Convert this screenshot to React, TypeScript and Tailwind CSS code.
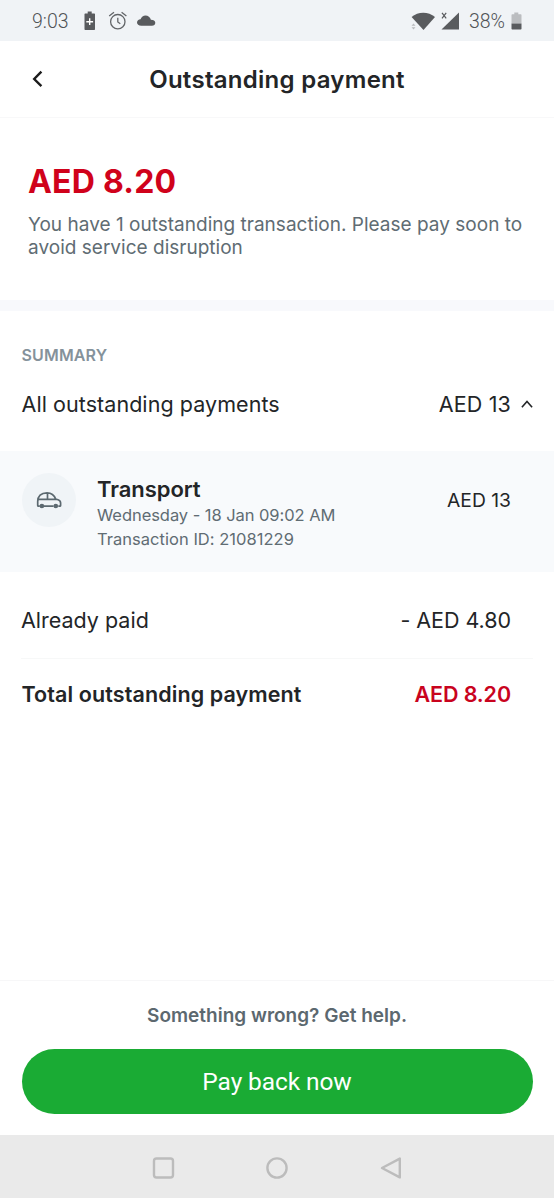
import React from 'react';

const StatusBar = () => (
  <div className="flex h-[41px] items-center bg-[#f0f3f6] pl-8 pr-8 font-['Roboto',sans-serif] text-[19.5px] leading-none text-[#626568]">
    <span className="w-[52px] pt-0.5 font-light text-[#505356]">9:03</span>
    {/* charging saver */}
    <svg className="h-5 w-3" viewBox="0 0 12 20" fill="#595b5e">
      <path d="M3.7 .5h4v1.900h2.600a.7.7 0 0 1 .7.7v15.200a.7.7 0 0 1-.7.7H1.200a.7.7 0 0 1-.7-.7V3.100a.7.7 0 0 1 .7-.7h2.500z" />
      <path d="M5.700 7.300v6.800M2.300 10.700h6.800" stroke="#fff" strokeWidth="1.400" fill="none" />
    </svg>
    <svg className="ml-3 h-5 w-5" viewBox="0 0 20 20" fill="none" stroke="#626568" strokeWidth="1.300">
      <circle cx="9.800" cy="10.700" r="7.200" />
      <path d="M9.800 6.700V11l2.500 1.700M1.200 5.100 6 1.300M13.600 1.300l4.800 3.800" />
    </svg>
    <svg className="ml-2 h-5 w-5" viewBox="0 0 20 20" fill="#595b5e">
      <path d="M5.300 14.800C2.700 14.800 1 13.500 1 11.600s1.500-3.300 3.500-3.400C5.400 5.800 7.300 4.400 9.500 4.400c2.600 0 4.700 1.700 5.400 4.300 2.500 0 4.400 1.200 4.400 3.100 0 1.800-1.400 3-3.400 3z" />
    </svg>
    <div className="ml-auto flex items-center">
      <svg className="h-5 w-[52px]" viewBox="0 0 52 20" fill="#595b5e">
        <path d="M4.600 6C7.800 3.100 12 1.700 16.200 1.700S24.700 3.100 28 6L16.500 18.900z" />
        <path d="m6.500 12.500 2 2.300h-4zM6.500 18.500l2-2.300h-4z" fill="#b9bcbf" />
        <path d="M52 1.500v17H34.500z" />
        <path d="m35 1.800 4.200 5.600m0-5.600L35 7.400" stroke="#595b5e" strokeWidth="1.200" />
      </svg>
      <span className="ml-[10px] pt-0.5 font-light text-[#505356]">38%</span>
      <svg className="ml-[6px] h-5 w-[11px]" viewBox="0 0 11 20">
        <path d="M3.300 1.500h4v1.700h2.500q.700 0 .700.700v8.600H.500V3.900q0-.7.700-.7h2.100z" fill="#bbbdc0" />
        <path d="M.500 12.500h10v5.300q0 .7-.7.7H1.200q-.7 0-.7-.7z" fill="#595b5e" />
      </svg>
    </div>
  </div>
);

const Header = () => (
  <header className="grid h-[77px] grid-cols-[48px_1fr_48px] items-center border-b border-[#f8f8f9]">
    <button type="button" aria-label="Back" className="pl-8">
      <svg className="h-5 w-3" viewBox="0 0 12 20" fill="none" stroke="#1c1c1c" strokeWidth="2.400">
        <path d="M9.400 2.700 2.200 10l7.200 7.200" />
      </svg>
    </button>
    <h1 className="pt-0.5 text-center text-[24px] font-semibold leading-none tracking-[0.28px]">Outstanding payment</h1>
  </header>
);

const CarIcon = () => (
  <svg className="h-[18px] w-[26px]" viewBox="0 0 26 18" fill="none" stroke="#5c6970" strokeWidth="1.700" strokeLinejoin="round">
    <path d="M3.800 15.200H2.500q-.8 0-.8-.8v-3.800C1.700 5 5 1.800 11 1.800c4.700 0 7.400 2.600 8.700 6.300l2.400.6q2.500.8 2.500 3.400v2.300q0 .8-.8.8h-1.500M8 15.200h9.600M2.400 8.300h17.400M11.500 1.800v6.500" />
    <circle cx="5.900" cy="15" r="1.500" fill="#5c6970" />
    <circle cx="19.800" cy="15" r="1.500" fill="#5c6970" />
  </svg>
);

const Transaction = () => (
  <div className="flex h-[121px] bg-[#f8fafc] pl-[21.500px] pr-[43px]">
    <div className="mt-[22px] flex h-[54px] w-[54px] items-center justify-center rounded-full bg-[#f0f4f7]">
      <CarIcon />
    </div>
    <div className="ml-[21.500px] mt-[26px] text-[16.500px] leading-[23px] text-[#606c73]">
      <h2 className="mb-[3px] text-[22px] font-semibold leading-[24px] tracking-[-0.05px] text-[#232527]">Transport</h2>
      <p className="tracking-[-0.06px]">Wednesday - 18 Jan 09:02 AM</p>
      <p className="mt-px tracking-[0.03px]">Transaction ID: 21081229</p>
    </div>
    <span className="ml-auto mt-[37px] text-[19.300px] leading-[24px]">AED 13</span>
  </div>
);

const NavBar = () => (
  <nav className="mb-0.5 flex h-[63px] items-center justify-center gap-[90px] bg-[#eaeaea] pt-[2px]">
    <svg className="h-6 w-6" viewBox="0 0 24 24" fill="none" stroke="#bcbcbc" strokeWidth="2.400">
      <rect x="3" y="2.500" width="19" height="19" rx="2.500" />
    </svg>
    <svg className="h-6 w-6" viewBox="0 0 24 24" fill="none" stroke="#bcbcbc" strokeWidth="2.400">
      <circle cx="12" cy="12" r="9.600" />
    </svg>
    <svg className="h-6 w-6" viewBox="0 0 24 24" fill="none" stroke="#bcbcbc" strokeWidth="2.400" strokeLinejoin="round">
      <path d="M20.800 2.600v18.800L3 12z" />
    </svg>
  </nav>
);

const App = () => {
  return (
    <div className="flex h-[1200px] w-[554px] flex-col bg-white font-['Inter',sans-serif] text-[#232527]">
      <StatusBar />
      <Header />

      <section className="h-[182px] pl-7 pt-[46px]">
        <p className="text-[32px] font-bold leading-[36px] tracking-[0.22px] text-[#d0021b]">AED 8.20</p>
        <p className="mt-[13px] whitespace-nowrap text-[19px] leading-[23px] tracking-[0.015px] text-[#606c73]">
          You have 1 outstanding transaction. Please pay soon to
          <br />
          avoid service disruption
        </p>
      </section>
      <div className="h-[11px] bg-[#f8f9fc]" />

      <section>
        <div className="h-[140px] pl-[21.500px] pr-[21px] pt-[34px]">
          <h3 className="text-[16px] font-semibold leading-5 tracking-[0.15px] text-[#85929b]">SUMMARY</h3>
          <div className="mt-[27px] flex items-center text-[21.500px] leading-6">
            <span className="tracking-[0.06px]">All outstanding payments</span>
            <span className="ml-auto tracking-[0.15px]">AED 13</span>
            <svg className="ml-[10px] h-3 w-3" viewBox="0 0 12 12" fill="none" stroke="#232527" strokeWidth="1.600">
              <path d="m.9 9.200 5.100-5.700 5.100 5.700" />
            </svg>
          </div>
        </div>

        <Transaction />

        <div className="mx-[21px] flex h-[87px] items-center justify-between border-b border-[#f7f8f8] pr-[22px] pt-[11px] text-[21.500px]">
          <span>Already paid</span>
          <span className="tracking-[-0.05px]">- AED 4.80</span>
        </div>
        <div className="ml-[21.500px] mr-[21px] flex h-[71px] items-center justify-between pr-[22px] text-[21.500px] font-semibold">
          <span className="tracking-[0.1px]">Total outstanding payment</span>
          <span className="tracking-[-0.1px] text-[#c9031e]">AED 8.20</span>
        </div>
      </section>

      <footer className="mt-auto flex h-[155px] flex-col border-t border-[#f7f7f8] px-[21.500px] pt-[23px]">
        <a href="#" className="text-center text-[19px] font-semibold leading-6 text-[#5c686f]">
          Something wrong? Get help.
        </a>
        <button type="button" className="mt-[21px] h-[65px] rounded-full bg-[#1aab34] pt-0.5 font-['Roboto',sans-serif] text-[24.500px] tracking-[-0.1px] text-white">
          Pay back now
        </button>
      </footer>
      <NavBar />
    </div>
  );
};

export default App;
